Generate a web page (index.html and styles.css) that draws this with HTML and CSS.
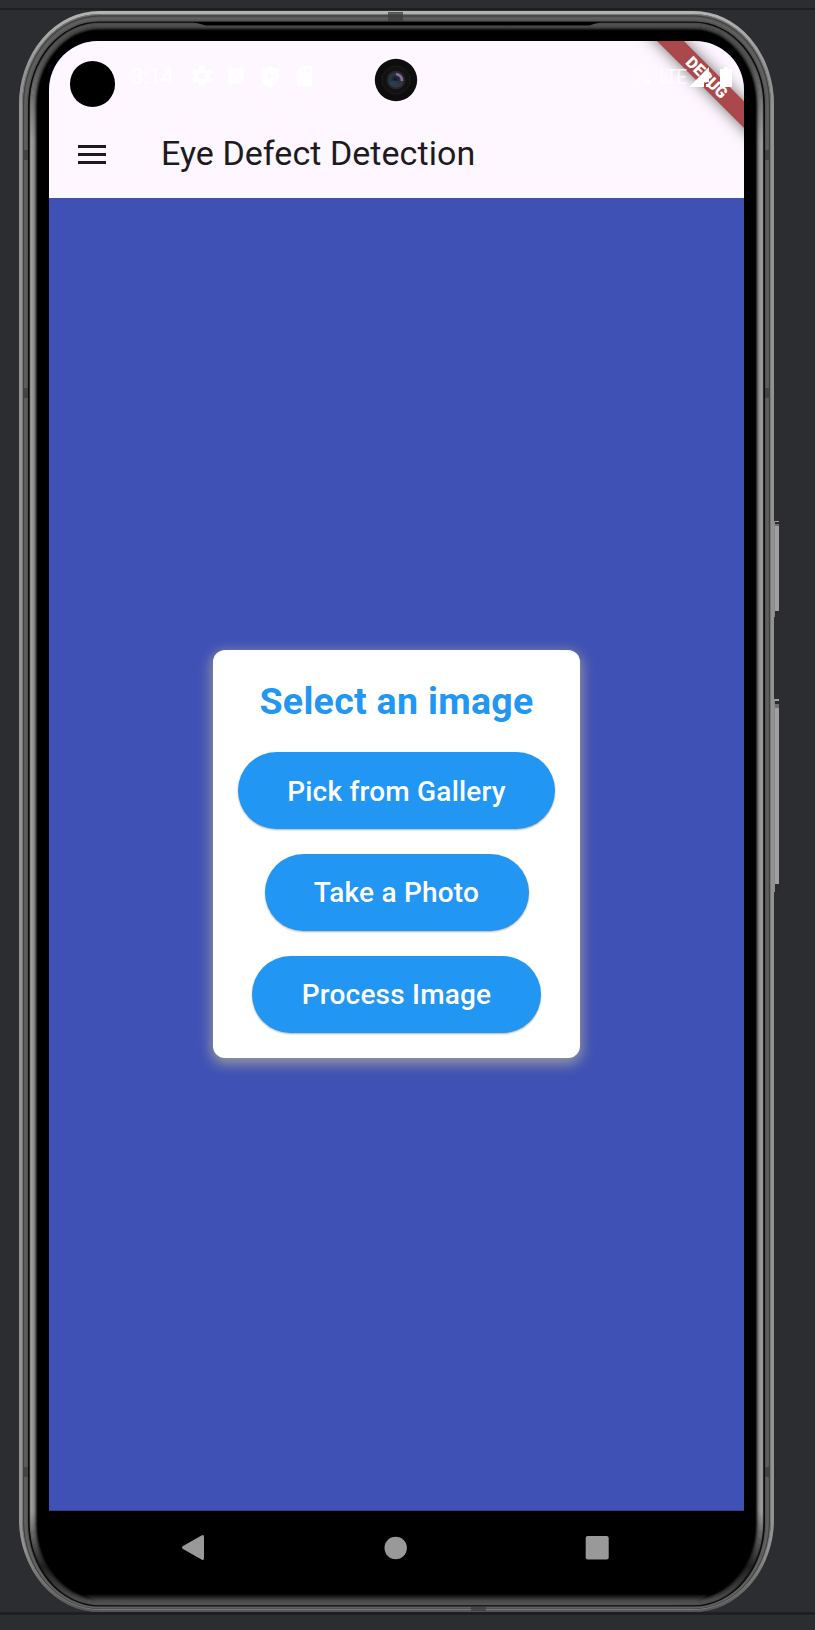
FILE: index.html
```html
<!DOCTYPE html>
<html lang="en">
<head>
<meta charset="utf-8">
<title>Eye Defect Detection</title>
<link rel="stylesheet" href="styles.css">
</head>
<body>
<main class="stage">
  <svg class="frame" width="815" height="1630" viewBox="0 0 815 1630" fill="none" aria-hidden="true">
    <defs>
      <linearGradient id="fade" x1="0" x2="0" y1="11" y2="1612" gradientUnits="userSpaceOnUse">
        <stop offset="0" stop-color="#b4b4b4"/><stop offset=".04" stop-color="#929292"/><stop offset=".96" stop-color="#929292"/><stop offset="1" stop-color="#555"/>
      </linearGradient>
      <linearGradient id="inner" x1="0" x2="0" y1="22" y2="1606" gradientUnits="userSpaceOnUse">
        <stop offset="0" stop-color="#505050"/><stop offset=".025" stop-color="#555"/><stop offset=".075" stop-color="#9c9c9c"/><stop offset=".94" stop-color="#9c9c9c"/><stop offset=".975" stop-color="#222"/><stop offset="1" stop-color="#555"/>
      </linearGradient>
      <linearGradient id="chin" x1="0" x2="0" y1="1594" y2="1605" gradientUnits="userSpaceOnUse">
        <stop offset="0" stop-color="#000"/><stop offset=".6" stop-color="#484848"/><stop offset="1" stop-color="#555"/>
      </linearGradient>
      <radialGradient id="lens" cx=".45" cy=".45" r=".6"><stop offset="0" stop-color="#17131f"/><stop offset=".5" stop-color="#253344"/><stop offset="1" stop-color="#3c3a3b"/></radialGradient>
    </defs>
    <path fill="#1e1f22" d="M0 8h815v2H0zM0 1612h815v3H0z"/>
    <path fill="#a0a0a0" d="M774 521h5v90h-5zM774 699h5v185h-5z"/>
    <path fill="#2a2a2a" d="M775 522h4v2h-4zM775 611h3v6h-3zM775 701h4v3h-4zM775 884h4v7h-4z"/>
    <path fill="#707070" d="M775 524h4v2h-4zM775 704h4v4h-4z"/>
    <path fill="#8a8a8a" d="M774 521h1v96h-1zM774 699h1v193h-1z"/>
    <rect x="19" y="11" width="755" height="1601" rx="80" ry="93" fill="#555"/>
    <rect x="20.500" y="12.500" width="752" height="1598" rx="79" ry="92" stroke="url(#fade)" stroke-width="3"/>
    <rect x="22.500" y="14.500" width="748" height="1595" rx="77" ry="90" stroke="#777"/>
    <rect x="23.500" y="16" width="746" height="1592.500" rx="76" ry="88" stroke="#414141"/>
    <rect x="25.500" y="18.500" width="742" height="1589" rx="74" ry="87" stroke="#606060" stroke-width="2"/>
    <rect x="28" y="21.500" width="737" height="1585" rx="71" ry="84" fill="#0c0c0c"/>
    <rect x="30" y="23" width="733" height="1582" rx="69" ry="82" fill="#000"/>
    <g stroke="url(#inner)" stroke-width="1.500">
      <rect x="30.500" y="23.500" width="732" height="1581" rx="69" ry="82" opacity=".9"/>
      <rect x="31.500" y="24.500" width="730" height="1579" rx="68" ry="81"/>
      <rect x="32.500" y="25.500" width="728" height="1577" rx="67" ry="80" opacity=".95"/>
      <rect x="33.500" y="26.500" width="726" height="1575" rx="66" ry="79" opacity=".85"/>
      <rect x="34.500" y="27.500" width="724" height="1573" rx="65" ry="78" opacity=".7"/>
      <rect x="35.500" y="28.500" width="722" height="1571" rx="64" ry="77" opacity=".45"/>
      <rect x="36.500" y="29.500" width="720" height="1569" rx="63" ry="76" opacity=".2"/>
    </g>
    <path fill="url(#chin)" d="M84 1594h625q-12 10-40 11H124q-28-1-40-11z"/>
    <path fill="#000" d="M193 22h408l-12 3.500H206z"/>
    <path fill="#3c3c3c" d="M388 12h15v9h-15zM24 150h4v10h-4zM765 150h4v10h-4zM24 388h4v10h-4zM765 388h4v10h-4zM24 1467h4v10h-4zM765 1467h4v10h-4zM471 1607h15v4h-15z" opacity=".75"/>
  </svg>

  <section class="screen">
    <header class="top">
      <div class="status">
        <span class="clock">3:14</span>
        <svg width="124" height="24" viewBox="190 64 124 24" fill="#fff" aria-hidden="true">
          <path fill-rule="evenodd" d="M199.500 66h5l.6 3 2 1.100 2.900-1 2.200 3.900-2.200 2.200v1.800l2.200 2.200-2.200 3.900-2.900-1-2 1.100-.6 2.900h-5l-.6-2.900-2-1.100-2.900 1-2.200-3.900 2.200-2.200v-1.800l-2.200-2.200 2.200-3.900 2.900 1 2-1.100zM202 72.500a3.500 3.500 0 1 0 0 7 3.500 3.500 0 0 0 0-7z"/>
          <path fill-rule="evenodd" d="M230 68h12q1.500 0 1.500 1.500v13q0 1.500-1.500 1.500h-12q-1.500 0-1.500-1.500v-13q0-1.500 1.500-1.500zm5.200 4-3.700 9h1.700l.8-2h4l.8 2h1.700l-3.700-9zm.8 2 1.400 3.600h-2.800z"/>
          <path fill-rule="evenodd" d="m270 66 9 3.500v6q0 8-9 12-9-4-9-12v-6zm-2 6v8l6-4z"/>
          <path fill-rule="evenodd" d="M302 66h8q2 0 2 2v16q0 2-2 2h-11q-2 0-2-2V71zm0 3v3h2v-3zm3 0v3h2v-3zm3 0v3h2v-3z"/>
        </svg>
      </div>
      <div class="appbar">
        <svg class="menu" width="28" height="20" viewBox="0 0 28 20" fill="#1d1b20" aria-label="Menu"><path d="M0 0h28v3H0zM0 8h28v3H0zM0 16h28v3H0z"/></svg>
        <h1>Eye Defect Detection</h1>
      </div>
    </header>
    <div class="body">
      <div class="card">
        <h2>Select an image</h2>
        <button class="gallery">Pick from Gallery</button>
        <button class="photo">Take a Photo</button>
        <button class="process">Process Image</button>
      </div>
    </div>
    <div class="ribbon">DEBUG</div>
    <div class="signals">
      <svg width="24" height="24" viewBox="629 64 24 24" aria-hidden="true"><path fill="#fff" opacity=".3" d="M630 71q9-7 18 0l-3 5h-4v6l-2 2z"/><path stroke="#fff" stroke-width="2" d="m645 79 5 5m0-5-5 5"/></svg>
      <span>LTE</span>
      <svg width="46" height="24" viewBox="688 64 46 24" fill="#fff" aria-hidden="true"><path d="m689 86 20-20v15h-5v5zM706 83h3v3h-3zM724 66h4v2h4v18h-12V68h4z"/></svg>
    </div>
    <span class="dot"></span>
    <svg class="camera" width="44" height="44" viewBox="-22 -22 44 44" aria-hidden="true">
      <circle r="21.200" fill="#0d0d0d"/><circle r="14" fill="#111" stroke="#1c1c1c"/><circle r="9.500" fill="#252525"/><circle r="7.500" fill="url(#lens)"/><path d="M0-6Q6-5 6 1" fill="none" stroke="#a77bb5" stroke-width="2.500" opacity=".8"/><ellipse cx="-2" cy="3" rx="4" ry="2.500" fill="#26445a" opacity=".7"/>
    </svg>
  </section>

  <nav class="nav">
    <svg width="24" height="28" viewBox="0 0 24 28"><path fill="#999" d="M20.500 1.500Q23 0 23 3v21q0 3-2.500 1.500L2 15q-2-1.500 0-3z"/></svg>
    <svg width="24" height="28" viewBox="0 0 24 28"><circle cx="12.700" cy="14" r="11.200" fill="#999"/></svg>
    <svg width="24" height="28" viewBox="0 0 24 28"><rect x=".7" y="2" width="23" height="23.500" rx="2" fill="#999"/></svg>
  </nav>
</main>
</body>
</html>
```
FILE: styles.css
```css
* { box-sizing: border-box; }
body { margin: 0; background: #2b2d30; font-family: Roboto, sans-serif; }
.stage {
  display: grid;
  grid-template-columns: 49px 695px 71px;
  grid-template-rows: 41px 1470px 119px;
  width: 815px;
  height: 1630px;
  overflow: hidden;
}
.frame { grid-area: 1 / 1 / 4 / 4; display: block; }
.screen {
  grid-area: 2 / 2;
  position: relative;
  display: flex;
  flex-direction: column;
  overflow: hidden;
  border-radius: 49px 49px 0 0;
  background: #3f51b5;
}
.top { height: 157px; background: #fef7ff; }
.status {
  display: flex;
  align-items: center;
  height: 70px;
  padding-left: 82px;
  color: #fff;
}
.clock { width: 59px; padding-top: 2px; font-size: 22px; line-height: 24px; }
.appbar { display: flex; align-items: center; height: 87px; padding: 0 0 1px 29px; }
.menu { margin-top: 1px; }
h1 {
  margin: -2px 0 0 55px;
  color: #1d1b20;
  font-size: 34px;
  font-weight: 400;
  line-height: 44px;
  letter-spacing: .05px;
  white-space: nowrap;
}
.body { flex: 1; display: flex; align-items: center; justify-content: center; border-bottom: 1px solid #32408f; }
.card {
  display: flex;
  flex-direction: column;
  align-items: center;
  gap: 25px;
  width: 367px;
  height: 408px;
  padding: 25px 0;
  border-radius: 12px;
  background: #fff;
  box-shadow: 0 4px 13px 2px rgba(158, 158, 158, .9);
}
h2 {
  margin: 0;
  height: 52px;
  color: #2196f3;
  font-size: 37.500px;
  font-weight: 700;
  line-height: 52px;
  letter-spacing: .3px;
  white-space: nowrap;
}
button {
  flex: none;
  height: 77px;
  padding: 0;
  border: 0;
  border-radius: 39px;
  background: #2196f3;
  color: #fff;
  font: 500 28px/77px Roboto, sans-serif;
  letter-spacing: .2px;
  box-shadow: 0 1px 2px rgba(0, 0, 0, .3);
}
.gallery { width: 317px; padding-top: 1px; }
.photo { width: 264px; }
.process { width: 289px; }
.ribbon {
  position: absolute;
  left: 558px;
  top: 27px;
  width: 200px;
  height: 18.600px;
  transform: rotate(45deg);
  background: #ab484b;
  color: #fff;
  font-size: 16px;
  font-weight: 900;
  line-height: 19px;
  text-align: center;
  box-shadow: 0 0 15px rgba(0, 0, 0, .55);
}
.signals {
  position: absolute;
  left: 580px;
  top: 23px;
  display: flex;
  align-items: center;
  color: #fff;
  font-size: 20px;
  line-height: 24px;
}
.signals span { width: 35px; padding: 1px 0 0 6px; letter-spacing: -1.500px; opacity: .75; }
.dot {
  position: absolute;
  left: 20.500px;
  top: 20px;
  width: 45.500px;
  height: 45.500px;
  border-radius: 50%;
  background: #000;
}
.camera { position: absolute; left: 325px; top: 17px; }
.nav {
  grid-area: 3 / 2;
  display: flex;
  justify-content: space-between;
  align-items: flex-start;
  padding: 23px 135px 0 132px;
}
```
